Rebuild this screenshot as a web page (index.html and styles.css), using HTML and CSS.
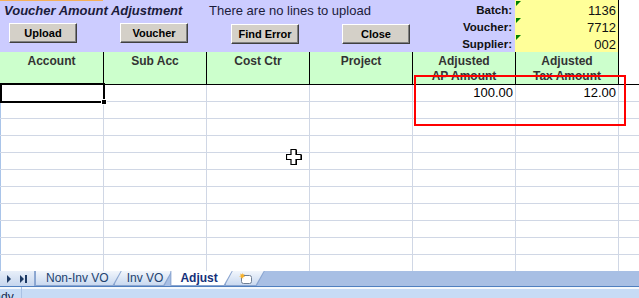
FILE: index.html
```html
<!DOCTYPE html>
<html lang="en">

<head>
  <meta charset="UTF-8">
  <meta name="viewport" content="width=device-width, initial-scale=1.0">
  <title>Voucher Amount Adjustment</title>
  <link rel="stylesheet" href="styles.css">
</head>

<body>
  <div class="sheet">
    <!-- Top band: title, action buttons, batch details -->
    <div class="band">
      <div class="panel">
        <div class="title">Voucher Amount Adjustment</div>
        <div class="message">There are no lines to upload</div>
        <div class="label label-1">Batch:</div>
        <div class="label label-2">Voucher:</div>
        <div class="label label-3">Supplier:</div>
        <div class="buttons">
          <button class="btn">Upload</button>
          <button class="btn">Voucher</button>
          <button class="btn btn-low">Find Error</button>
          <button class="btn btn-low">Close</button>
        </div>
      </div>
      <div class="values">
        <div class="value">1136</div>
        <div class="value">7712</div>
        <div class="value">002</div>
      </div>
      <div class="spare"></div>
    </div>

    <!-- Column headers and lines -->
    <div class="grid">
      <div class="hd">Account</div>
      <div class="hd">Sub Acc</div>
      <div class="hd">Cost Ctr</div>
      <div class="hd">Project</div>
      <div class="hd">Adjusted<br>AP Amount</div>
      <div class="hd">Adjusted<br>Tax Amount</div>
      <div class="hd hd-blank"></div>

      <div class="c"></div><div class="c"></div><div class="c"></div><div class="c"></div><div class="c num">100.00</div><div class="c num">12.00</div><div class="c"></div>
      <div class="c"></div><div class="c"></div><div class="c"></div><div class="c"></div><div class="c"></div><div class="c"></div><div class="c"></div>
      <div class="c"></div><div class="c"></div><div class="c"></div><div class="c"></div><div class="c"></div><div class="c"></div><div class="c"></div>
      <div class="c"></div><div class="c"></div><div class="c"></div><div class="c"></div><div class="c"></div><div class="c"></div><div class="c"></div>
      <div class="c"></div><div class="c"></div><div class="c"></div><div class="c"></div><div class="c"></div><div class="c"></div><div class="c"></div>
      <div class="c"></div><div class="c"></div><div class="c"></div><div class="c"></div><div class="c"></div><div class="c"></div><div class="c"></div>
      <div class="c"></div><div class="c"></div><div class="c"></div><div class="c"></div><div class="c"></div><div class="c"></div><div class="c"></div>
      <div class="c"></div><div class="c"></div><div class="c"></div><div class="c"></div><div class="c"></div><div class="c"></div><div class="c"></div>
      <div class="c"></div><div class="c"></div><div class="c"></div><div class="c"></div><div class="c"></div><div class="c"></div><div class="c"></div>
      <div class="c"></div><div class="c"></div><div class="c"></div><div class="c"></div><div class="c"></div><div class="c"></div><div class="c"></div>
      <div class="c"></div><div class="c"></div><div class="c"></div><div class="c"></div><div class="c"></div><div class="c"></div><div class="c"></div>
    </div>

    <!-- Overlays -->
    <div class="selection"><span class="handle"></span></div>
    <div class="highlight"></div>
    <svg class="cursor" width="16" height="16" viewBox="0 0 16 16">
      <path d="M6 1h5v5h5v5h-5v5H6v-5H1V6h5z" fill="#000" />
      <path d="M5 0.5h5v5h5v5h-5v5H5v-5H0.5v-5H5z" fill="#fff" stroke="#000" stroke-width="1.2" />
    </svg>
  </div>

  <!-- Sheet tabs -->
  <div class="tabs">
    <div class="nav">
      <svg width="22" height="8" viewBox="0 0 22 8">
        <path d="M0 0l4 4-4 4z" fill="#1e3a64" />
        <path d="M13 0l4 4-4 4z" fill="#1e3a64" />
        <rect x="18" y="0" width="2" height="8" fill="#1e3a64" />
      </svg>
    </div>
    <div class="tab tab-1"><span class="face">Non-Inv VO</span></div>
    <div class="tab tab-2"><span class="face">Inv VO</span></div>
    <div class="tab tab-active"><span class="face">Adjust</span></div>
    <div class="tab tab-new">
      <span class="face">
        <svg width="14" height="12" viewBox="0 0 14 12">
          <rect x="3.5" y="3.5" width="10" height="8" rx="2" fill="#fff" stroke="#6f7f95" />
          <path d="M4 0.5l0.8 2 2-0.6-1.2 1.7 1.6 1.2-2 0.2 0 2-1.2-1.6-1.4 1.4 0.4-2-2-0.6 1.9-0.8-0.8-1.9 1.9 0.9z" fill="#f7b12a" />
        </svg>
      </span>
    </div>
  </div>

  <!-- Status bar -->
  <div class="status">
    <div class="status-text"><span>Ready</span></div>
  </div>
</body>

</html>
```

FILE: styles.css
```css
* {
  margin: 0;
  padding: 0;
  box-sizing: border-box;
}

body {
  font-family: 'Liberation Sans', Arial, sans-serif;
  width: 639px;
  height: 298px;
  overflow: hidden;
  background: #fff;
}

.sheet {
  position: relative;
  height: 271px;
  overflow: hidden;
  box-shadow: inset 1px 0 #a9c4e9;
}

/* Top band */
.band {
  display: grid;
  grid-template-columns: 515px 104px 1fr;
  height: 52px;
}

.panel {
  display: grid;
  grid-template-columns: 206px 206px 103px;
  grid-template-rows: 17px 17px 18px;
  background: linear-gradient(#f5b05a, #f5b05a) 0 0 / 103px 1px no-repeat, #ccccff;
  color: #1b1b3a;
}

.title,
.message {
  grid-row: 1;
  padding-top: 4px;
  font-size: 13px;
  line-height: 14px;
  white-space: nowrap;
}

.title {
  grid-column: 1;
  padding-left: 4px;
  font-style: italic;
  font-weight: bold;
}

.message {
  grid-column: 2;
  padding-left: 3px;
}

.label {
  grid-column: 3;
  padding: 4px 3px 0 0;
  text-align: right;
  font-weight: bold;
  font-size: 11.5px;
  line-height: 13px;
  color: #111;
}

.label-1 { grid-row: 1; }
.label-2 { grid-row: 2; }
.label-3 { grid-row: 3; }

.buttons {
  grid-column: 1 / 3;
  grid-row: 2 / 4;
  display: flex;
  align-items: flex-start;
  gap: 43px;
  padding: 6px 0 0 9px;
}

.btn {
  width: 68px;
  height: 20px;
  font-family: 'Liberation Sans', Arial, sans-serif;
  font-weight: bold;
  font-size: 11px;
  color: #000;
  background: #d4d0c8;
  border: 1px solid;
  border-color: #fff #404040 #404040 #fff;
  box-shadow: inset -1px -1px #808080;
}

.btn-low {
  margin-top: 1px;
}

.values {
  display: grid;
  grid-template-rows: 17px 17px 18px;
  background: #ffff99;
  border-right: 1px solid #000;
}

.value {
  position: relative;
  padding: 4px 2px 0 0;
  text-align: right;
  font-size: 13px;
  line-height: 14px;
  color: #111;
}

/* green comment marker */
.value::before {
  content: "";
  position: absolute;
  left: 1px;
  top: 1px;
  border-top: 5px solid #008000;
  border-right: 5px solid transparent;
}

/* Grid */
.grid {
  display: grid;
  grid-template-columns: 104px repeat(5, 103px) 1fr;
  grid-template-rows: 33px;
  grid-auto-rows: 17px;
}

.hd {
  background: #ccffcc;
  border-right: 1px solid #000;
  border-bottom: 1px solid #000;
  padding-top: 2px;
  text-align: center;
  font-weight: bold;
  font-size: 12px;
  line-height: 15px;
  color: #333;
}

.hd-blank {
  background: #fff;
}

.c {
  border-right: 1px solid #d0d7e5;
  border-bottom: 1px solid #d0d7e5;
}

.grid > div:nth-child(7n) {
  border-right: none;
}

.num {
  padding-right: 2px;
  text-align: right;
  font-size: 13px;
  line-height: 16px;
  color: #000;
}

/* Overlays */
.selection {
  position: absolute;
  left: 0;
  top: 83px;
  width: 105px;
  height: 20px;
  border: 2px solid #000;
}

.handle {
  position: absolute;
  right: -4px;
  bottom: -4px;
  width: 6px;
  height: 6px;
  background: #000;
  border: 1px solid #fff;
}

.highlight {
  position: absolute;
  left: 414px;
  top: 75px;
  width: 212px;
  height: 51px;
  border: 2px solid #f00;
}

.cursor {
  position: absolute;
  left: 286px;
  top: 149px;
}

/* Sheet tabs */
.tabs {
  display: flex;
  height: 15px;
  background: #a8bfe4;
}

.nav {
  display: flex;
  align-items: center;
  width: 35px;
  padding-left: 7px;
  background: linear-gradient(#e8eff9, #c6d6ee);
  border-right: 1px solid #8da8d2;
}

.tab {
  position: relative;
  background: #8aa5d0;
  padding: 0 1px 1px 1px;
  clip-path: polygon(0 0, 100% 0, calc(100% - 8px) 100%, 0 100%);
}

.face {
  display: flex;
  align-items: center;
  height: 100%;
  padding: 0 12px 0 10px;
  background: linear-gradient(#f2f6fc, #c9d9f0);
  clip-path: polygon(0 0, 100% 0, calc(100% - 8px) 100%, 0 100%);
  font-size: 12px;
  line-height: 14px;
  color: #22426f;
  white-space: nowrap;
}

.tab-1 {
  z-index: 3;
}

.tab-2 {
  z-index: 2;
  margin-left: -8px;
}

.tab-2 .face {
  padding: 0 8px 0 12px;
}

.tab-active {
  z-index: 4;
  margin-left: -2px;
}

.tab-active .face {
  padding: 0 14px 0 9px;
  background: #fff;
  font-weight: bold;
  color: #15317a;
}

.tab-new {
  z-index: 1;
  margin-left: -8px;
}

.tab-new .face {
  padding: 0 12px;
}

/* Status bar */
.status {
  display: flex;
  height: 12px;
  border-top: 1px solid #4f7fbf;
  background: linear-gradient(#f4f8fd 0, #f4f8fd 2px, #c7dbf5 2px);
}

.status-text {
  width: 22px;
  overflow: hidden;
  padding-top: 3px;
  border-right: 1px solid #a9c1e4;
  font-size: 12px;
  line-height: 14px;
  color: #15284b;
  white-space: nowrap;
}

.status-text span {
  margin-left: -21px;
}
```
